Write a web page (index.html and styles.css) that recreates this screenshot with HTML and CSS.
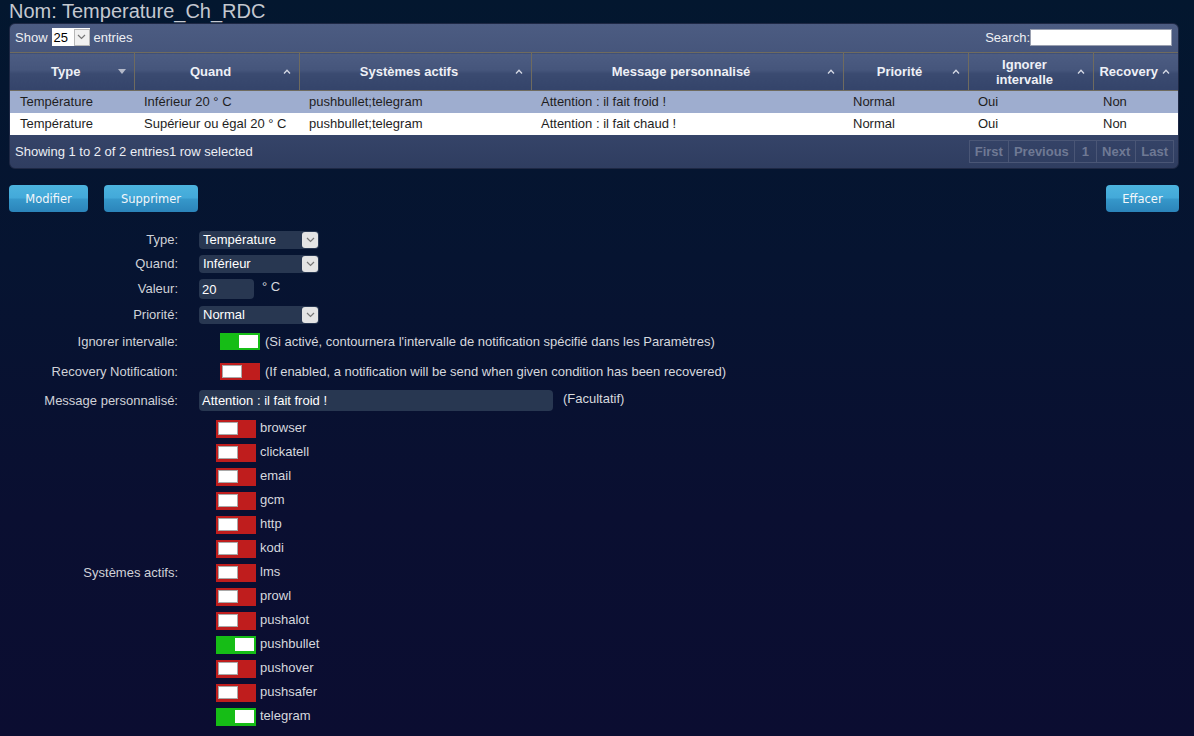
FILE: index.html
```html
<!DOCTYPE html>
<html lang="fr">
<head>
<meta charset="utf-8">
<title>Notifications</title>
<link rel="stylesheet" href="styles.css">
</head>
<body>
<h1 class="title">Nom: Temperature_Ch_RDC</h1>

<div class="dt-wrapper">
  <div class="dt-top">
    <div class="dt-length">Show
      <span class="len-select"><span class="len-val">25</span><span class="len-arrow"><svg width="9" height="6" viewBox="0 0 9 6"><polyline points="1,1 4.5,4.5 8,1" fill="none" stroke="#777" stroke-width="1.2"/></svg></span></span>
      entries</div>
    <div class="dt-search">Search:<span class="search-input"></span></div>
  </div>
  <table class="dt">
    <colgroup>
      <col class="c1"><col class="c2"><col class="c3"><col class="c4"><col class="c5"><col class="c6"><col class="c7">
    </colgroup>
    <thead>
      <tr>
        <th><span class="th-text">Type</span><svg class="sort" width="8" height="5" viewBox="0 0 8 5"><polygon points="0,0 8,0 4,5" fill="#b4b9c9"/></svg></th>
        <th><span class="th-text">Quand</span><svg class="sort" width="8" height="5" viewBox="0 0 8 5"><polyline points="1,4.5 4,1.2 7,4.5" fill="none" stroke="#d4d8e4" stroke-width="1.3"/></svg></th>
        <th><span class="th-text">Systèmes actifs</span><svg class="sort" width="8" height="5" viewBox="0 0 8 5"><polyline points="1,4.5 4,1.2 7,4.5" fill="none" stroke="#d4d8e4" stroke-width="1.3"/></svg></th>
        <th><span class="th-text">Message personnalisé</span><svg class="sort" width="8" height="5" viewBox="0 0 8 5"><polyline points="1,4.5 4,1.2 7,4.5" fill="none" stroke="#d4d8e4" stroke-width="1.3"/></svg></th>
        <th><span class="th-text">Priorité</span><svg class="sort" width="8" height="5" viewBox="0 0 8 5"><polyline points="1,4.5 4,1.2 7,4.5" fill="none" stroke="#d4d8e4" stroke-width="1.3"/></svg></th>
        <th><span class="th-text">Ignorer intervalle</span><svg class="sort" width="8" height="5" viewBox="0 0 8 5"><polyline points="1,4.5 4,1.2 7,4.5" fill="none" stroke="#d4d8e4" stroke-width="1.3"/></svg></th>
        <th class="th-narrow"><span class="th-text">Recovery</span><svg class="sort" width="8" height="5" viewBox="0 0 8 5"><polyline points="1,4.5 4,1.2 7,4.5" fill="none" stroke="#d4d8e4" stroke-width="1.3"/></svg></th>
      </tr>
    </thead>
    <tbody>
      <tr class="selected">
        <td>Température</td><td>Inférieur 20 ° C</td><td>pushbullet;telegram</td><td>Attention : il fait froid !</td><td>Normal</td><td>Oui</td><td>Non</td>
      </tr>
      <tr>
        <td>Température</td><td>Supérieur ou égal 20 ° C</td><td>pushbullet;telegram</td><td>Attention : il fait chaud !</td><td>Normal</td><td>Oui</td><td>Non</td>
      </tr>
    </tbody>
  </table>
  <div class="dt-bottom">
    <div class="dt-info">Showing 1 to 2 of 2 entries1 row selected</div>
    <div class="dt-paginate">
      <span class="pg">First</span><span class="pg">Previous</span><span class="pg pg-num">1</span><span class="pg">Next</span><span class="pg">Last</span>
    </div>
  </div>
</div>

<div class="actions">
  <div class="actions-left">
    <button class="btn btn-modifier">Modifier</button>
    <button class="btn btn-supprimer">Supprimer</button>
  </div>
  <button class="btn btn-effacer">Effacer</button>
</div>

<div class="form">
  <div class="frow r-type">
    <div class="flabel">Type:</div>
    <div class="fctrl"><span class="sel"><span class="sel-val">Température</span><span class="sel-arr"><svg width="9" height="6" viewBox="0 0 9 6"><polyline points="1,1 4.5,4.5 8,1" fill="none" stroke="#777" stroke-width="1.2"/></svg></span></span></div>
  </div>
  <div class="frow r-quand">
    <div class="flabel">Quand:</div>
    <div class="fctrl"><span class="sel"><span class="sel-val">Inférieur</span><span class="sel-arr"><svg width="9" height="6" viewBox="0 0 9 6"><polyline points="1,1 4.5,4.5 8,1" fill="none" stroke="#777" stroke-width="1.2"/></svg></span></span></div>
  </div>
  <div class="frow r-valeur">
    <div class="flabel">Valeur:</div>
    <div class="fctrl"><span class="inp inp-valeur">20</span><span class="unit">° C</span></div>
  </div>
  <div class="frow r-prio">
    <div class="flabel">Priorité:</div>
    <div class="fctrl"><span class="sel"><span class="sel-val">Normal</span><span class="sel-arr"><svg width="9" height="6" viewBox="0 0 9 6"><polyline points="1,1 4.5,4.5 8,1" fill="none" stroke="#777" stroke-width="1.2"/></svg></span></span></div>
  </div>
  <div class="frow r-ignore">
    <div class="flabel">Ignorer intervalle:</div>
    <div class="fctrl ctrl-toggle"><span class="toggle on"><span class="knob"></span></span><span class="hint">(Si activé, contournera l'intervalle de notification spécifié dans les Paramètres)</span></div>
  </div>
  <div class="frow r-recovery">
    <div class="flabel">Recovery Notification:</div>
    <div class="fctrl ctrl-toggle"><span class="toggle"><span class="knob"></span></span><span class="hint">(If enabled, a notification will be send when given condition has been recovered)</span></div>
  </div>
  <div class="frow r-msg">
    <div class="flabel">Message personnalisé:</div>
    <div class="fctrl"><span class="inp inp-msg">Attention : il fait froid !</span><span class="opt">(Facultatif)</span></div>
  </div>
  <div class="frow r-systems">
    <div class="flabel">Systèmes actifs:</div>
    <div class="systems">
      <div class="sys"><span class="toggle"><span class="knob"></span></span><span class="sys-name">browser</span></div>
      <div class="sys"><span class="toggle"><span class="knob"></span></span><span class="sys-name">clickatell</span></div>
      <div class="sys"><span class="toggle"><span class="knob"></span></span><span class="sys-name">email</span></div>
      <div class="sys"><span class="toggle"><span class="knob"></span></span><span class="sys-name">gcm</span></div>
      <div class="sys"><span class="toggle"><span class="knob"></span></span><span class="sys-name">http</span></div>
      <div class="sys"><span class="toggle"><span class="knob"></span></span><span class="sys-name">kodi</span></div>
      <div class="sys"><span class="toggle"><span class="knob"></span></span><span class="sys-name">lms</span></div>
      <div class="sys"><span class="toggle"><span class="knob"></span></span><span class="sys-name">prowl</span></div>
      <div class="sys"><span class="toggle"><span class="knob"></span></span><span class="sys-name">pushalot</span></div>
      <div class="sys"><span class="toggle on"><span class="knob"></span></span><span class="sys-name">pushbullet</span></div>
      <div class="sys"><span class="toggle"><span class="knob"></span></span><span class="sys-name">pushover</span></div>
      <div class="sys"><span class="toggle"><span class="knob"></span></span><span class="sys-name">pushsafer</span></div>
      <div class="sys"><span class="toggle on"><span class="knob"></span></span><span class="sys-name">telegram</span></div>
    </div>
  </div>
</div>
</body>
</html>
```

FILE: styles.css
```css
* { box-sizing: border-box; }
html, body { margin: 0; }
body {
  height: 736px;
  overflow: hidden;
  padding: 0 15px 0 9px;
  background: linear-gradient(180deg, #03172f 0%, #061431 35%, #0a0f31 70%, #0b0d31 100%);
  font-family: "Liberation Sans", Arial, sans-serif;
  color: #d2d4da;
}
.title {
  margin: 0;
  height: 23px;
  line-height: 22px;
  font-size: 20px;
  font-weight: normal;
  color: #c4c8d0;
}

/* ---------- data table ---------- */
.dt-wrapper {
  width: 1170px;
  border: 1px solid #1e2844;
  border-radius: 6px;
  background: linear-gradient(180deg, #4c5c82 0%, #3d4c72 50%, #2f3d60 100%);
  overflow: hidden;
}
.dt-top {
  height: 28px;
  display: flex;
  align-items: center;
  justify-content: space-between;
  padding: 0 6px 2px 5px;
  font-size: 13px;
  color: #eef0f4;
}
.dt-length { display: flex; align-items: center; gap: 4px; }
.len-select {
  display: inline-flex;
  align-items: center;
  height: 18px;
  width: 38px;
  background: #fff;
  color: #000;
  font-size: 13px;
}
.len-val { flex: 1; padding-left: 2px; }
.len-arrow {
  width: 16px; height: 17px;
  display: flex; align-items: center; justify-content: center;
  background: #f0f0f0;
  border: 1px solid #b8b8b8;
}
.dt-search { display: flex; align-items: center; }
.search-input {
  display: inline-block;
  width: 142px; height: 17px;
  background: #fff;
  border: 1px solid #9aa0b0;
}
.dt {
  width: 1168px;
  border-collapse: collapse;
  table-layout: fixed;
}
.c1 { width: 124px; } .c2 { width: 165px; } .c3 { width: 232px; } .c4 { width: 312px; }
.c5 { width: 125px; } .c6 { width: 125px; } .c7 { width: 85px; }
.dt th {
  position: relative;
  height: 38px;
  padding: 0 22px 0 10px;
  border: 1px solid #6f6b5f;
  background: linear-gradient(180deg, #4d5d83 0%, #45557b 45%, #3a4a70 55%, #34446a 100%);
  color: #eef0f6;
  font-size: 13px;
  font-weight: bold;
  line-height: 15px;
  text-align: center;
}
.dt th:first-child { border-left: 0; }
.dt th:last-child { border-right: 0; }
.dt th.th-narrow { padding: 0 16px 0 2px; }
.dt th .sort {
  position: absolute;
  right: 8px;
  top: 16px;
}
.dt td {
  height: 22px;
  padding: 0 10px;
  font-size: 13px;
  color: #1e1e1e;
  background: #fff;
  white-space: nowrap;
}
.dt tr.selected td { background: #9eadcf; }
.dt-bottom {
  height: 33px;
  display: flex;
  align-items: center;
  justify-content: space-between;
  padding: 0 4px 0 5px;
}
.dt-info { font-size: 13px; color: #eceef4; }
.dt-paginate { display: flex; }
.pg {
  height: 23px;
  line-height: 21px;
  padding: 0 5px;
  border: 1px solid #4a5676;
  margin-left: -1px;
  font-size: 13px;
  font-weight: bold;
  color: #6f7994;
}
.pg-num { padding: 0 7px; }

/* ---------- buttons ---------- */
.actions {
  margin-top: 16px;
  width: 1170px;
  display: flex;
  justify-content: space-between;
}
.actions-left { display: flex; gap: 16px; }
.btn {
  height: 27px;
  border: 0;
  border-radius: 4px;
  padding: 1px 0 0;
  background: linear-gradient(180deg, #4cb3de 0%, #43a9d9 48%, #3698ca 52%, #2b84ba 100%);
  color: #f2f6fa;
  font-family: "DejaVu Sans", Verdana, sans-serif;
  font-size: 11.5px;
}
.btn-modifier { width: 79px; }
.btn-supprimer { width: 94px; }
.btn-effacer { width: 73px; }

/* ---------- form ---------- */
.form { margin-top: 16px; }
.frow { display: flex; align-items: center; }
.flabel {
  width: 169px;
  flex: none;
  text-align: right;
  font-size: 13px;
  color: #d0d2d8;
}
.fctrl { margin-left: 21px; display: flex; align-items: center; }
.r-type { height: 24px; }
.r-quand { height: 24px; }
.r-valeur { height: 26px; }
.r-prio { height: 26px; }
.r-ignore { height: 28px; }
.r-recovery { height: 31px; }
.r-msg { height: 28px; }
.sel {
  display: inline-flex;
  align-items: center;
  width: 120px;
  height: 18px;
  border-radius: 4px;
  background: #283751;
  color: #fff;
  font-size: 13px;
}
.sel-val { flex: 1; padding-left: 4px; }
.sel-arr {
  width: 16px; height: 16px;
  margin-right: 1px;
  display: flex; align-items: center; justify-content: center;
  background: #e4e4e4;
  border-radius: 3px;
}
.inp {
  display: inline-flex;
  align-items: center;
  border-radius: 4px;
  background: #283751;
  color: #fff;
  font-size: 13px;
  padding: 0 3px;
}
.inp-valeur { width: 55px; height: 20px; padding-top: 2px; }
.unit { margin-left: 8px; font-size: 13px; color: #d6d8de; margin-bottom: 5px; }
.inp-msg { width: 354px; height: 21px; }
.opt { margin-left: 10px; font-size: 13px; color: #d6d8de; margin-bottom: 5px; }
.ctrl-toggle { margin-left: 42px; gap: 5px; }
.hint { font-size: 13px; color: #d6d8de; }

.toggle {
  display: inline-flex;
  align-items: center;
  width: 40px;
  height: 17px;
  padding: 0 2px;
  background: #bf1d1d;
  flex: none;
}
.toggle.on { background: #16bd16; justify-content: flex-end; }
.knob {
  width: 20px;
  height: 13px;
  background: #fff;
  border: 1px solid #a8a8a8;
}
.toggle.on .knob { border-color: #ffffff; width: 19px; }

.r-systems { margin-top: 5px; }
.systems { margin-left: 38px; display: flex; flex-direction: column; gap: 6px; }
.sys { display: flex; align-items: center; height: 18px; gap: 4px; }
.sys .toggle { height: 18px; }
.sys-name { font-size: 13px; color: #d6d8de; margin-top: -2px; }
```
